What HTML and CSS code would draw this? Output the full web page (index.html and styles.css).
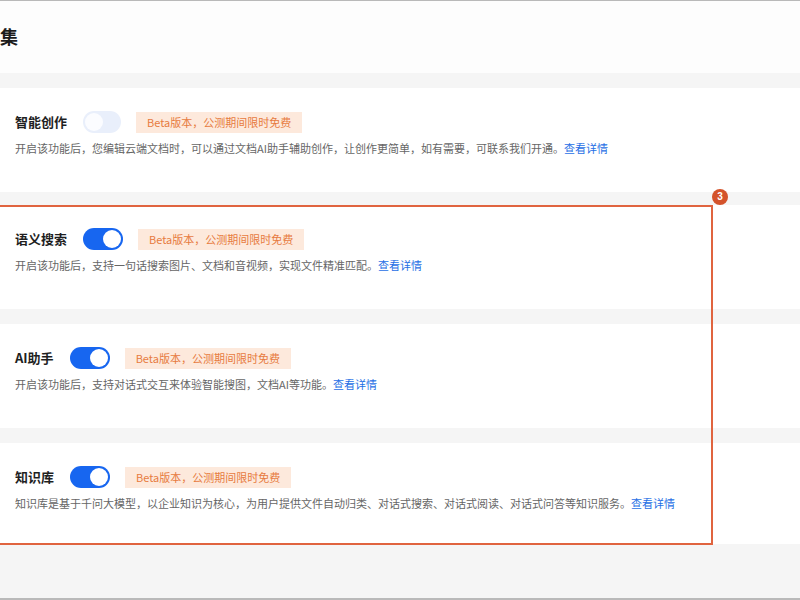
FILE: index.html
```html
<!DOCTYPE html>
<html lang="zh-CN">
<head>
<meta charset="utf-8">
<link rel="stylesheet" href="styles.css">
</head>
<body>
<div class="page">
  <header class="header"><h1 class="title">集</h1></header>
  <main class="list">
    <section class="card">
      <div class="row">
        <span class="name">智能创作</span>
        <span class="switch switch-off"><span class="knob"></span></span>
        <span class="tag">Beta版本，公测期间限时免费</span>
      </div>
      <p class="desc">开启该功能后，您编辑云端文档时，可以通过文档AI助手辅助创作，让创作更简单，如有需要，可联系我们开通。<a class="link">查看详情</a></p>
    </section>
    <div class="group">
      <section class="card">
        <div class="row">
          <span class="name">语义搜索</span>
          <span class="switch switch-on"><span class="knob"></span></span>
          <span class="tag">Beta版本，公测期间限时免费</span>
        </div>
        <p class="desc">开启该功能后，支持一句话搜索图片、文档和音视频，实现文件精准匹配。<a class="link">查看详情</a></p>
      </section>
      <section class="card">
        <div class="row">
          <span class="name">AI助手</span>
          <span class="switch switch-on"><span class="knob"></span></span>
          <span class="tag">Beta版本，公测期间限时免费</span>
        </div>
        <p class="desc">开启该功能后，支持对话式交互来体验智能搜图，文档AI等功能。<a class="link">查看详情</a></p>
      </section>
      <section class="card">
        <div class="row">
          <span class="name">知识库</span>
          <span class="switch switch-on"><span class="knob"></span></span>
          <span class="tag">Beta版本，公测期间限时免费</span>
        </div>
        <p class="desc">知识库是基于千问大模型，以企业知识为核心，为用户提供文件自动归类、对话式搜索、对话式阅读、对话式问答等知识服务。<a class="link">查看详情</a></p>
      </section>
      <div class="highlight"><span class="badge">3</span></div>
    </div>
  </main>
</div>
</body>
</html>
```

FILE: styles.css
```css
* { box-sizing: border-box; }
html, body { margin: 0; padding: 0; }
body {
  background: #f5f5f5;
  font-family: "Noto Sans CJK SC", "Noto Sans", sans-serif;
  color: #222;
  overflow: hidden;
}
.page {
  width: 800px;
  height: 600px;
  border-top: 1px solid #b9b9b9;
  border-bottom: 2px solid #b9b9b9;
  background: #f5f5f5;
  overflow: hidden;
}
.header {
  background: #fdfdfd;
  height: 72px;
  padding-top: 23px;
}
.title {
  margin: 0;
  font-size: 18px;
  line-height: 24px;
  font-weight: 700;
  color: #1c1c1c;
}
.list {
  padding-top: 15px;
  display: flex;
  flex-direction: column;
  gap: 13px;
}
.group {
  position: relative;
  display: flex;
  flex-direction: column;
  gap: 15px;
}
.card {
  background: #fff;
  height: 104px;
  padding: 23px 0 0 15px;
}
.group .card:last-of-type { height: 101px; }
.row {
  display: flex;
  align-items: center;
  gap: 16px;
  height: 22px;
}
.name {
  font-size: 13px;
  font-weight: 700;
  color: #1f1f1f;
  line-height: 22px;
}
.switch {
  position: relative;
  width: 40px;
  height: 22px;
  border-radius: 11px;
  flex: none;
}
.switch-on { background: #1766f0; }
.switch-off { background: #e9effb; width: 38px; }
.knob {
  position: absolute;
  top: 2px;
  width: 18px;
  height: 18px;
  border-radius: 50%;
  background: #fff;
}
.switch-on .knob { right: 2px; }
.switch-off .knob { left: 2px; background: #fbfcff; }
.tag {
  margin-left: -1px;
  height: 21px;
  padding: 0 11px;
  background: #fde9dc;
  color: #e77b40;
  font-size: 11px;
  line-height: 21px;
  white-space: nowrap;
}
.desc {
  margin: 6px 0 0;
  font-size: 11px;
  line-height: 18px;
  color: #666;
  white-space: nowrap;
}
.link { color: #1f6fe5; }
.highlight {
  position: absolute;
  left: -10px;
  top: 0;
  width: 723px;
  height: 340px;
  border: 2px solid #e0643f;
  pointer-events: none;
}
.badge {
  position: absolute;
  right: -17px;
  top: -18px;
  width: 16px;
  height: 16px;
  border-radius: 50%;
  background: #d4532b;
  color: #fff;
  font-family: "Liberation Sans", sans-serif;
  font-size: 10px;
  font-weight: 700;
  line-height: 16px;
  text-align: center;
}
```
